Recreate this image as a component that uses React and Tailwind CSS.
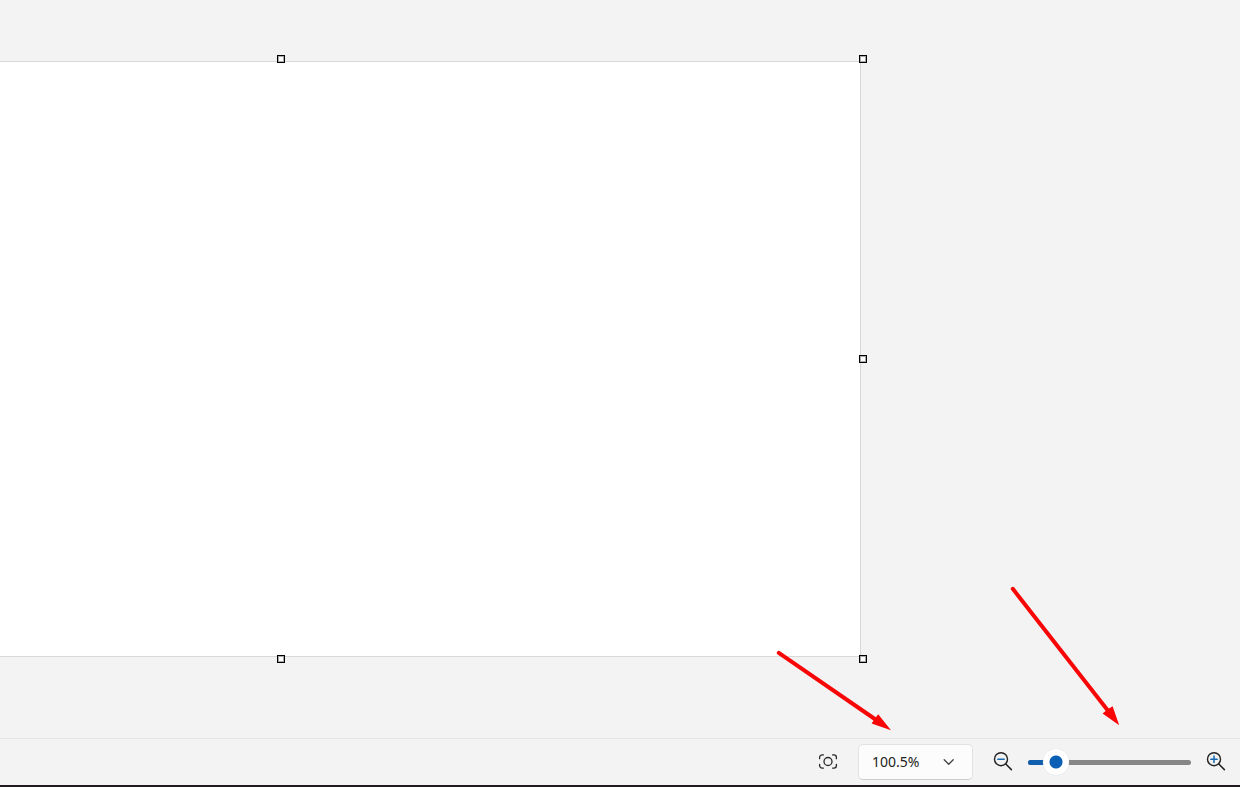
import React, { useState } from "react";

const HANDLES = [
  "left-1/2 top-0",
  "left-full top-0",
  "left-full top-1/2",
  "left-1/2 top-full",
  "left-full top-full",
];

const ZOOM_LEVELS = ["50%", "100%", "100.5%", "200%", "400%"];

function FitIcon() {
  return (
    <svg width="20" height="18" viewBox="0 0 20 18" fill="none" stroke="#2b2b2b" strokeWidth="1.3" strokeLinecap="round">
      <circle cx="10" cy="8.5" r="4" />
      <path d="M1.6 5.7V4.5a2.6 2.6 0 0 1 2.6-2.6h1.2M14.6 1.9h1.2a2.6 2.6 0 0 1 2.6 2.6v1.2M18.4 11.3v1.2a2.6 2.6 0 0 1-2.6 2.6h-1.2M5.4 15.1H4.2a2.6 2.6 0 0 1-2.6-2.6v-1.2" />
    </svg>
  );
}

function MagnifierIcon({ plus }) {
  return (
    <svg width="20" height="20" viewBox="0 0 20 20" fill="none" strokeLinecap="round">
      <circle cx="8" cy="7.2" r="6.5" stroke="#222222" strokeWidth="1.4" />
      <path d="M12.8 12L18.4 17.6" stroke="#222222" strokeWidth="1.5" />
      <path d={plus ? "M4.8 7.2h6.4M8 4v6.4" : "M4.8 7.2h6.4"} stroke="#1668b0" strokeWidth="1.5" />
    </svg>
  );
}

function Arrows() {
  return (
    <svg
      className="pointer-events-none absolute right-[110px] bottom-[47px]"
      width="360"
      height="160"
      viewBox="770 580 360 160"
      fill="#f80505"
      stroke="#f80505"
      aria-hidden="true"
    >
      <path d="M778.8 652.8L877 720.5M1012.8 588.8L1109 712" strokeWidth="4" strokeLinecap="round" />
      <path d="M891 730.3L878.2 714.2L875 718.5L871.6 723.6ZM1119.2 725.3L1112.6 706.2L1107.5 709.5L1102.6 713.6Z" stroke="none" />
    </svg>
  );
}

function Canvas() {
  return (
    <main className="flex flex-1 overflow-hidden pt-[61px] pr-[379px] pb-[81px]">
      <div className="relative -ml-[299px] flex-1 border border-[#d9d9d9] bg-white">
        <div className="absolute -inset-[3px]">
          {HANDLES.map((place) => (
            <span
              key={place}
              className={`absolute size-2 -translate-x-1/2 -translate-y-1/2 border border-black bg-white shadow-[inset_0_0_0_1px_#a8a8a8] ${place}`}
            />
          ))}
        </div>
      </div>
    </main>
  );
}

function StatusBar() {
  const [zoom, setZoom] = useState("100.5%");
  const [position, setPosition] = useState(11);

  const move = (step) => setPosition((p) => Math.min(100, Math.max(0, p + step)));

  return (
    <footer className="flex h-[49px] items-center justify-end border-t border-b-2 border-t-[#e6e6e6] border-b-[#1f1b1f] bg-[#f3f3f3] pr-[14px]">
      <button type="button" aria-label="Fit to window" className="mr-5">
        <FitIcon />
      </button>

      <div className="relative mr-5">
        <select
          aria-label="Zoom level"
          value={zoom}
          onChange={(e) => setZoom(e.target.value)}
          className="block h-9 w-[115px] appearance-none rounded-[5px] border border-[#e2e2e2] border-b-[#cccccc] bg-[#fcfcfc] pl-[13px] text-sm text-[#222222]"
        >
          {ZOOM_LEVELS.map((level) => (
            <option key={level}>{level}</option>
          ))}
        </select>
        <svg
          className="pointer-events-none absolute inset-y-0 right-[18px] my-auto"
          width="12"
          height="8"
          viewBox="0 0 12 8"
          fill="none"
          stroke="#444444"
          strokeWidth="1.3"
          strokeLinecap="round"
          strokeLinejoin="round"
        >
          <path d="M1.2 1.8L5.7 6.3L10.2 1.8" />
        </svg>
      </div>

      <button type="button" aria-label="Zoom out" onClick={() => move(-5)}>
        <MagnifierIcon />
      </button>
      <div className="relative mx-[15px] flex h-[26px] w-[163px] items-center">
        <div className="h-[5px] w-full overflow-hidden rounded-full bg-[#868686]">
          <div className="h-full bg-[#0f5fae]" style={{ width: `${position}%` }} />
        </div>
        <input
          type="range"
          min="0"
          max="100"
          aria-label="Zoom"
          value={position}
          onChange={(e) => setPosition(Number(e.target.value))}
          className="absolute inset-0 m-0 h-full w-full appearance-none bg-transparent [&::-webkit-slider-thumb]:size-[26px] [&::-webkit-slider-thumb]:appearance-none [&::-webkit-slider-thumb]:rounded-full [&::-webkit-slider-thumb]:bg-[radial-gradient(circle,#0b60b5_6px,#ffffff_7px)] [&::-webkit-slider-thumb]:shadow-[0_0_1px_#c4c4c4]"
        />
      </div>
      <button type="button" aria-label="Zoom in" onClick={() => move(5)}>
        <MagnifierIcon plus />
      </button>
    </footer>
  );
}

export default function App() {
  return (
    <div className="relative flex min-h-screen flex-col bg-[#f3f3f3] font-['Noto_Sans',sans-serif]">
      <Canvas />
      <StatusBar />
      <Arrows />
    </div>
  );
}
